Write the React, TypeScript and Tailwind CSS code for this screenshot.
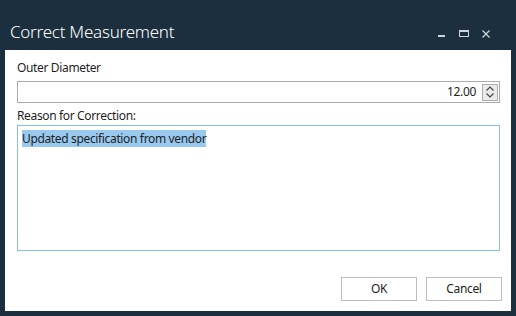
export default function App() {
    return (
        <div className="flex h-[316px] w-[516px] flex-col bg-[#1b2f3e] font-['Noto_Sans',sans-serif] text-[12px] tracking-[-0.35px] text-[#1e1e1e]">
            <div className="flex h-[50px] items-end pb-[6px] pl-[10px] pr-[26px]">
                <div className="text-[17px] font-light leading-[24px] tracking-[-0.25px] text-white">Correct Measurement</div>
                <div className="ml-auto flex items-center gap-[13px] pb-[6px]">
                    <svg width="8" height="8" viewBox="0 0 8 8">
                        <rect x="0" y="5" width="7" height="2" fill="#d0d4d8" />
                    </svg>
                    <svg width="10" height="8" viewBox="0 0 10 8">
                        <rect x="0.5" y="0.5" width="9" height="6" fill="none" stroke="#d0d4d8" />
                        <rect x="0.5" y="0.5" width="9" height="1.5" fill="#d0d4d8" />
                    </svg>
                    <svg width="8" height="8" viewBox="0 0 8 8">
                        <path d="M0.5 0.5 L7.5 7.5 M7.5 0.5 L0.5 7.5" stroke="#d0d4d8" strokeWidth="1.3" />
                    </svg>
                </div>
            </div>
            <div className="mx-[5px] flex h-[261px] flex-col bg-white px-[12px] pt-[10px]">
                <label className="leading-[16px]">Outer Diameter</label>
                <div className="mt-[5px] flex h-[22px] w-[483px] items-center justify-end border border-[#ababab] pr-[1px]">
                    <span className="mr-[6px] leading-[16px]">12.00</span>
                    <div className="flex h-[17px] w-[16px] flex-col items-center justify-center gap-[2px] border border-[#adadad] bg-[#eaeaea]">
                        <svg width="8" height="5" viewBox="0 0 8 5">
                            <path d="M0.5 4.5 L4 1 L7.5 4.5" fill="none" stroke="#444" strokeWidth="1.2" />
                        </svg>
                        <svg width="8" height="5" viewBox="0 0 8 5">
                            <path d="M0.5 0.5 L4 4 L7.5 0.5" fill="none" stroke="#444" strokeWidth="1.2" />
                        </svg>
                    </div>
                </div>
                <label className="mt-[5px] leading-[16px]">Reason for Correction:</label>
                <div className="mt-[1px] h-[126px] w-[483px] border border-[#86bfe6] px-[4px] pt-[4px]">
                    <span className="bg-[#99c9ef] leading-[16px]">Updated specification from vendor</span>
                </div>
                <div className="mt-auto mb-[10px] -mr-[3px] flex justify-end gap-[9px]">
                    <button type="button" className="h-[24px] w-[76px] border border-[#bebebe] bg-white leading-[16px]">OK</button>
                    <button type="button" className="h-[24px] w-[76px] border border-[#bebebe] bg-white leading-[16px]">Cancel</button>
                </div>
            </div>
        </div>
    );
}
